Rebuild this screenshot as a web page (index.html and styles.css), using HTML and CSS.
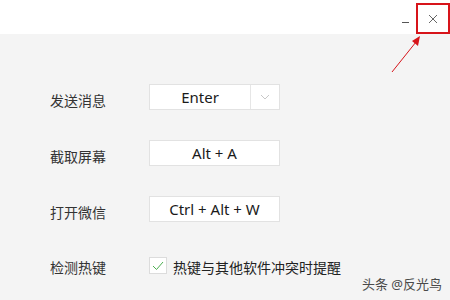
FILE: index.html
```html
<!DOCTYPE html>
<html lang="zh-CN">
<head>
    <meta charset="UTF-8">
    <title>快捷按键</title>
    <link rel="stylesheet" href="styles.css">
</head>
<body>
    <div class="window">
        <!-- Title bar -->
        <div class="titlebar">
            <div class="btn-min"><span class="min-line"></span></div>
            <div class="btn-close">
                <svg width="10" height="10" viewBox="0 0 10 10">
                    <path d="M1 1 L9 9 M9 1 L1 9" stroke="#666" stroke-width="1" fill="none"/>
                </svg>
            </div>
        </div>

        <!-- Shortcut settings -->
        <div class="content">
            <div class="row">
                <span class="label">发送消息</span>
                <div class="key-box select">
                    <span class="key-text">Enter</span>
                    <span class="arrow">
                        <svg width="10" height="6" viewBox="0 0 10 6">
                            <polyline points="1,1 5,5 9,1" stroke="#c8c8c8" stroke-width="1" fill="none"/>
                        </svg>
                    </span>
                </div>
            </div>
            <div class="row">
                <span class="label">截取屏幕</span>
                <div class="key-box"><span class="key-text">Alt + A</span></div>
            </div>
            <div class="row">
                <span class="label">打开微信</span>
                <div class="key-box"><span class="key-text">Ctrl + Alt + W</span></div>
            </div>
            <div class="row check-row">
                <span class="label">检测热键</span>
                <div class="checkbox">
                    <svg width="12" height="10" viewBox="0 0 12 10">
                        <polyline points="1,5 4.5,8.5 11,1" stroke="#4caf50" stroke-width="1" fill="none"/>
                    </svg>
                </div>
                <span class="check-text">热键与其他软件冲突时提醒</span>
            </div>
        </div>

        <!-- Annotation arrow -->
        <svg class="pointer" width="40" height="45" viewBox="0 0 40 45">
            <line x1="2" y1="42" x2="26" y2="12" stroke="#d7141a" stroke-width="1"/>
            <polygon points="30,6 22,11 28,16" fill="#d7141a"/>
        </svg>

        <div class="watermark">头条 @反光鸟</div>
    </div>
</body>
</html>
```

FILE: styles.css
```css
/* Base */
* {
    margin: 0;
    padding: 0;
    box-sizing: border-box;
}

body {
    width: 450px;
    height: 300px;
    overflow: hidden;
    background: #f4f4f4;
    font-family: "Noto Sans", "Noto Sans CJK SC", sans-serif;
    color: #333;
}

.window {
    position: relative;
    width: 450px;
    height: 300px;
}

/* Title bar */
.titlebar {
    height: 34px;
    background: #fff;
    display: flex;
    justify-content: flex-end;
    align-items: flex-start;
}

.btn-min {
    width: 21px;
    height: 30px;
    margin-top: 3px;
    display: flex;
    justify-content: center;
    align-items: center;
    padding-top: 8px;
}

.min-line {
    display: block;
    width: 7px;
    height: 1px;
    background: #555;
}

.btn-close {
    width: 34px;
    height: 31px;
    margin-top: 3px;
    border: 2px solid #d7141a;
    display: flex;
    justify-content: center;
    align-items: center;
    padding-top: 1px;
}

/* Rows */
.content {
    padding: 50px 0 0 50px;
    display: flex;
    flex-direction: column;
    gap: 30px;
}

.row {
    display: flex;
    align-items: center;
    height: 26px;
}

.label {
    width: 99px;
    font-size: 14px;
    color: #333;
    padding-top: 5px;
}

.key-box {
    width: 131px;
    height: 26px;
    background: #fff;
    border: 1px solid #e2e2e2;
    display: flex;
    align-items: center;
}

.key-text {
    flex: 1;
    text-align: center;
    font-size: 15px;
    color: #1a1a1a;
}

.select .arrow {
    width: 29px;
    height: 100%;
    border-left: 1px solid #e6e6e6;
    display: flex;
    justify-content: center;
    align-items: center;
}

/* Checkbox row */
.check-row {
    margin-top: -1px;
}

.checkbox {
    width: 18px;
    height: 17px;
    background: #fff;
    border: 1px solid #dcdcdc;
    display: flex;
    justify-content: center;
    align-items: center;
    margin-top: 3px;
}

.check-text {
    margin-left: 6px;
    font-size: 14px;
    color: #222;
    padding-top: 5px;
}

/* Overlays */
.pointer {
    position: absolute;
    left: 390px;
    top: 30px;
}

.watermark {
    position: absolute;
    right: 8px;
    bottom: 7px;
    font-size: 13px;
    color: #4a4a4a;
}
```
